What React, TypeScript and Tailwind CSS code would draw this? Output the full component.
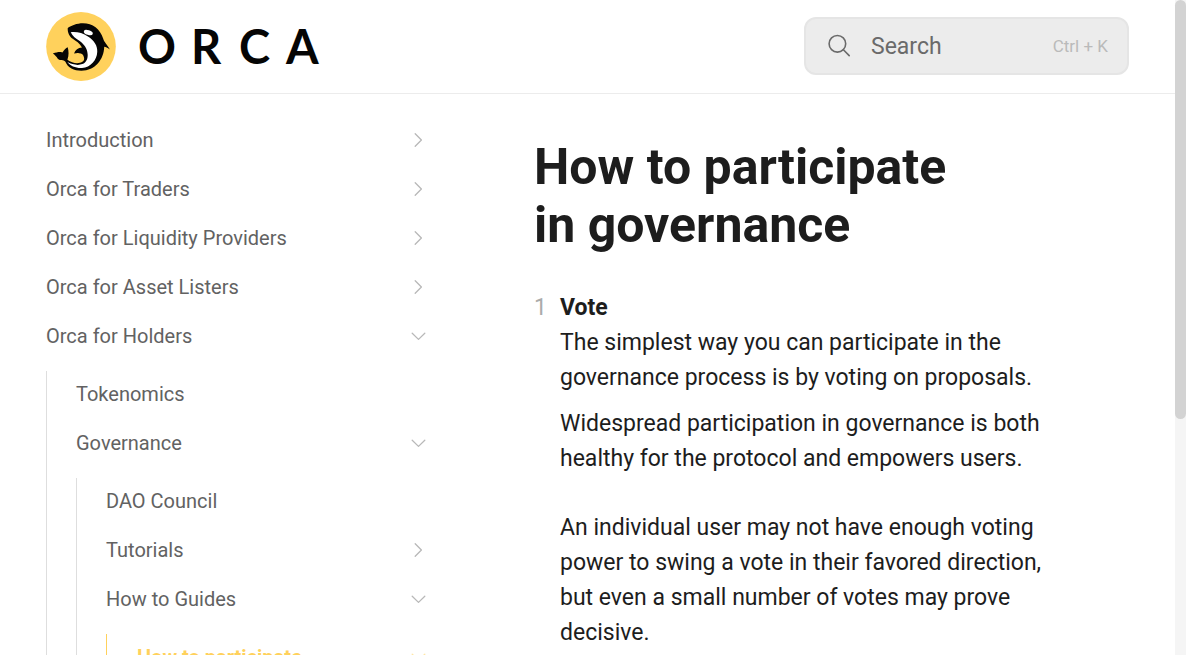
import React from "react";

type NavItem = {
  label: string;
  state?: "open" | "closed";
  active?: boolean;
  children?: NavItem[];
};

const nav: NavItem[] = [
  { label: "Introduction", state: "closed" },
  { label: "Orca for Traders", state: "closed" },
  { label: "Orca for Liquidity Providers", state: "closed" },
  { label: "Orca for Asset Listers", state: "closed" },
  {
    label: "Orca for Holders",
    state: "open",
    children: [
      { label: "Tokenomics" },
      {
        label: "Governance",
        state: "open",
        children: [
          { label: "DAO Council" },
          { label: "Tutorials", state: "closed" },
          {
            label: "How to Guides",
            state: "open",
            children: [{ label: "How to participate", state: "open", active: true }],
          },
        ],
      },
    ],
  },
];

function Chevron({ open }: { open: boolean }) {
  return (
    <svg
      viewBox="0 0 16 16"
      className="size-4 shrink-0"
      fill="none"
      stroke="currentColor"
      strokeWidth="1.3"
      strokeLinecap="round"
      strokeLinejoin="round"
      aria-hidden="true"
    >
      <path d={open ? "M2.2 5.2 8.5 11.4 14.8 5.2" : "M5.2 1.8 11.4 8 5.2 14.2"} />
    </svg>
  );
}

function NavList({ items, nested }: { items: NavItem[]; nested?: boolean }) {
  const active = items.some((item) => item.active);
  return (
    <ul
      className={
        nested
          ? active
            ? "mt-3 flex flex-col gap-[3px] border-l border-[#ffd15c] pl-[30px]"
            : "mt-3 flex flex-col gap-[3px] border-l border-[#dedede] pl-[29px]"
          : "flex flex-col gap-[3px]"
      }
    >
      {items.map((item) => (
        <li key={item.label}>
          <a
            href="#"
            className={
              item.active
                ? "flex h-[46px] items-center justify-between text-xl font-bold text-[#ffd15c]"
                : "flex h-[46px] items-center justify-between text-xl text-[#626262]"
            }
          >
            {item.label}
            {item.state && (
              <span className={item.active ? "text-[#ffe6a6]" : "text-[#b8b8b8]"}>
                <Chevron open={item.state === "open"} />
              </span>
            )}
          </a>
          {item.children && <NavList items={item.children} nested />}
        </li>
      ))}
    </ul>
  );
}

function Logo() {
  return (
    <a href="#" aria-label="Orca home" className="flex items-center gap-[22px]">
      <svg viewBox="48 35 210 208" className="h-[69px] w-[70px]" aria-hidden="true">
        <ellipse cx="153" cy="139" rx="105" ry="104" fill="#ffd15c" />
        <path
          d="M113 83C124 76 140 69 159 69C188 69 211 86 220 116C222 125 231 133 240 148C232 143 228 141 223 140C222 178 196 212 154 212C132 212 113 203 106 185C100 177 91 184 83 176C80 170 74 164 68 160C82 156 88 154 97 157C102 149 107 143 113 141C116 152 117 166 112 179C124 188 139 191 150 188C159 186 164 181 162 172C161 163 155 159 147 159C142 158 138 159 132 160C136 149 144 143 156 142C150 130 137 122 128 116C119 109 112 98 113 83Z"
          fill="#050505"
        />
        <path
          d="M122 96C140 94 158 98 174 109C193 121 203 137 202 155C201 181 182 202 156 204C138 205 120 198 112 186C126 194 145 197 157 192C170 186 174 175 173 162C172 145 162 132 148 122C137 114 128 109 122 96Z"
          fill="#fff"
        />
        <ellipse cx="175" cy="97" rx="14" ry="7" transform="rotate(18 175 97)" fill="#fff" />
      </svg>
      <svg viewBox="0 0 190 64" className="h-16 w-[190px]" role="img" aria-label="ORCA">
        <text
          x="0 53 101 148"
          y="50"
          fill="#050505"
          fontFamily="Lato, sans-serif"
          fontWeight="700"
          fontSize="47"
        >
          ORCA
        </text>
      </svg>
    </a>
  );
}

export default function App() {
  return (
    <div className="flex h-screen overflow-hidden bg-white font-[Roboto,sans-serif] text-[#1d1d1d]">
      <div className="flex min-w-0 grow flex-col">
        <header className="flex h-[94px] shrink-0 items-center justify-between border-b border-[#ececec] px-[46px] pb-px">
          <Logo />
          <label className="flex h-[58px] w-[325px] items-center rounded-xl border-2 border-[#e5e5e5] bg-[#ececec] pr-[19px] pl-[21px] text-[#6a6a6a]">
            <svg
              viewBox="0 0 24 24"
              className="size-6 shrink-0"
              fill="none"
              stroke="currentColor"
              strokeWidth="1.6"
              strokeLinecap="round"
              aria-hidden="true"
            >
              <circle cx="10.4" cy="9.8" r="8.3" />
              <path d="M16.4 15.8 22.2 21.6" />
            </svg>
            <input
              type="text"
              placeholder="Search"
              aria-label="Search"
              className="ml-5 min-w-0 grow bg-transparent pt-0.5 text-[23px] outline-none placeholder:text-[#6a6a6a]"
            />
            <kbd className="shrink-0 pt-0.5 font-[Roboto,sans-serif] text-[17px] text-[#bababa]">
              Ctrl + K
            </kbd>
          </label>
        </header>
        <div className="flex min-h-0 grow overflow-hidden">
          <nav aria-label="Documentation" className="w-[472px] shrink-0 pt-[23px] pr-[46px] pl-[46px]">
            <NavList items={nav} />
          </nav>
          <main className="min-w-0 grow pt-11 pr-[105px] pl-[62px]">
            <h1 className="text-[50px] leading-[58px] font-bold text-balance">
              How to participate in governance
            </h1>
            <ol className="mt-9 text-[23px] leading-[35px]">
              <li className="flex">
                <span className="w-[26px] shrink-0 text-[#ababab]">1</span>
                <div>
                  <h2 className="font-bold">Vote</h2>
                  <p>
                    The simplest way you can participate in the governance process is by voting on
                    proposals.
                  </p>
                  <p className="mt-[11px]">
                    Widespread participation in governance is both healthy for the protocol and
                    empowers users.
                  </p>
                  <p className="mt-[34px]">
                    An individual user may not have enough voting power to swing a vote in their
                    favored direction, but even a small number of votes may prove decisive.
                  </p>
                </div>
              </li>
            </ol>
          </main>
        </div>
      </div>
      <div className="w-[11px] shrink-0 bg-[#f5f5f5]" aria-hidden="true">
        <div className="h-[64%] rounded-full bg-[#d3d3d3]" />
      </div>
    </div>
  );
}
